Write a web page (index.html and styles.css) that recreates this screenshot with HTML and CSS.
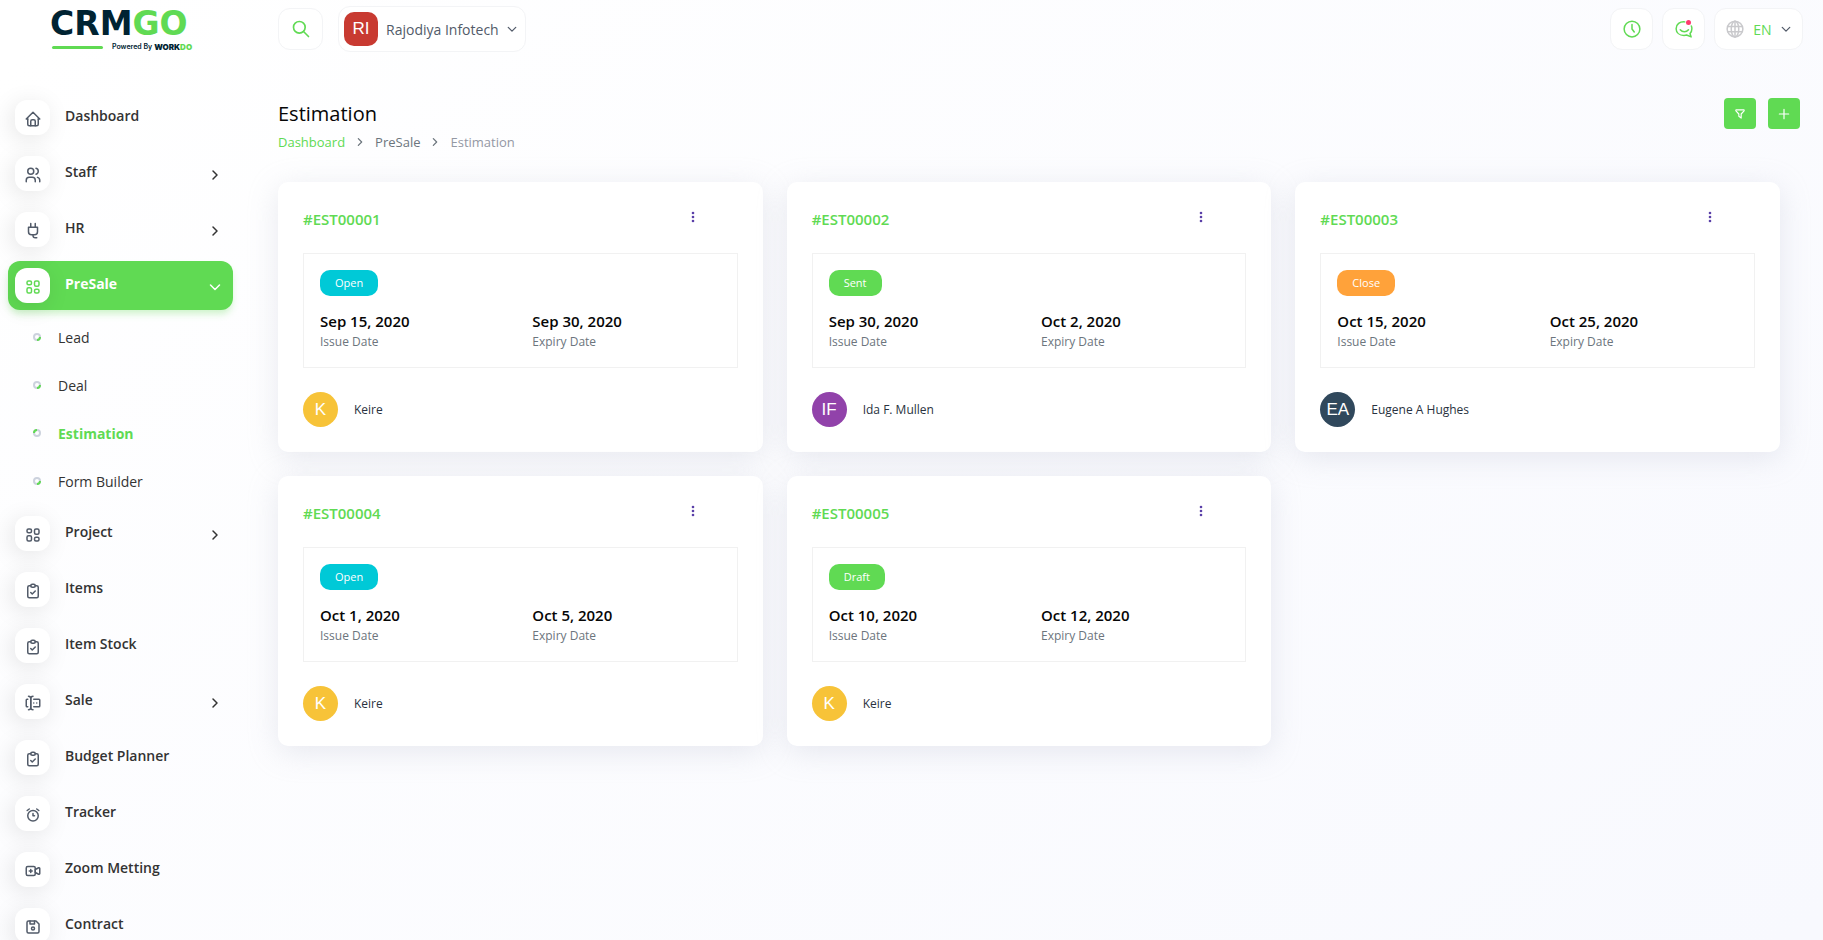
FILE: index.html
```html
<!DOCTYPE html>
<html lang="en">
<head>
<meta charset="utf-8">
<meta name="viewport" content="width=device-width, initial-scale=1">
<title>Estimation</title>
<link rel="stylesheet" href="styles.css">
</head>
<body>
<svg class="sprite" aria-hidden="true">
  <symbol id="i-home" viewBox="0 0 24 24"><path d="M5 12H3l9-9 9 9h-2"/><path d="M5 12v7a2 2 0 0 0 2 2h10a2 2 0 0 0 2-2v-7"/><path d="M9 21v-6a2 2 0 0 1 2-2h2a2 2 0 0 1 2 2v6"/></symbol>
  <symbol id="i-users" viewBox="0 0 24 24"><circle cx="9" cy="7" r="4"/><path d="M3 21v-2a4 4 0 0 1 4-4h4a4 4 0 0 1 4 4v2"/><path d="M16 3.13a4 4 0 0 1 0 7.75"/><path d="M21 21v-2a4 4 0 0 0-3-3.85"/></symbol>
  <symbol id="i-plug" viewBox="0 0 24 24"><path d="M9 2v5M15 2v5"/><path d="M6 7h12v6a4 4 0 0 1-4 4h-4a4 4 0 0 1-4-4z"/><path d="M12 17v1a3 3 0 0 0 3 3h2"/></symbol>
  <symbol id="i-layout" viewBox="0 0 24 24"><rect x="4" y="4" width="6" height="5" rx="2"/><rect x="4" y="13" width="6" height="7" rx="2"/><rect x="14" y="4" width="6" height="7" rx="2"/><rect x="14" y="15" width="6" height="5" rx="2"/></symbol>
  <symbol id="i-clipboard" viewBox="0 0 24 24"><path d="M9 5H7a2 2 0 0 0-2 2v12a2 2 0 0 0 2 2h10a2 2 0 0 0 2-2V7a2 2 0 0 0-2-2h-2"/><rect x="9" y="3" width="6" height="4" rx="2"/><path d="M9 14l2 2 4-4"/></symbol>
  <symbol id="i-forms" viewBox="0 0 24 24"><path d="M12 3a3 3 0 0 0-3 3v12a3 3 0 0 0 3 3"/><path d="M6 3a3 3 0 0 1 3 3v12a3 3 0 0 1-3 3"/><path d="M13 7h7a1 1 0 0 1 1 1v8a1 1 0 0 1-1 1h-7"/><path d="M5 7H4a1 1 0 0 0-1 1v8a1 1 0 0 0 1 1h1"/><path d="M17 12h.01M13 12h.01"/></symbol>
  <symbol id="i-alarm" viewBox="0 0 24 24"><circle cx="12" cy="13" r="7"/><path d="M12 10v3h2"/><path d="M7 4L4.250 6M17 4l2.750 2"/></symbol>
  <symbol id="i-video" viewBox="0 0 24 24"><path d="M15 10l4.553-2.276A1 1 0 0 1 21 8.618v6.764a1 1 0 0 1-1.447.894L15 14z"/><rect x="3" y="6" width="12" height="12" rx="2"/><path d="M7 12h4M9 10v4"/></symbol>
  <symbol id="i-floppy" viewBox="0 0 24 24"><path d="M6 4h10l4 4v10a2 2 0 0 1-2 2H6a2 2 0 0 1-2-2V6a2 2 0 0 1 2-2"/><circle cx="12" cy="14" r="2"/><path d="M14 4v4H8V4"/></symbol>
  <symbol id="i-right" viewBox="0 0 24 24"><path d="M8 4l8 8-8 8"/></symbol>
  <symbol id="i-down" viewBox="0 0 24 24"><path d="M3 8l9 9 9-9"/></symbol>
  <symbol id="i-search" viewBox="0 0 24 24"><circle cx="10" cy="10" r="7"/><path d="M21 21l-6-6"/></symbol>
  <symbol id="i-clock" viewBox="0 0 24 24"><circle cx="12" cy="12" r="10.500"/><path d="M12 6v6l3 4"/></symbol>
  <symbol id="i-chat" viewBox="0 0 24 24"><path d="M13 2.500C6.500 2 1.500 5.500 1.500 11.500c0 5.500 4.500 9 10.500 9 1.500 0 2.500-.2 3.500-.5l6 2.500-1.500-4.500c1.500-1.500 2.500-3.500 2.500-6.500 0-1.500-.2-2.500-.7-3.500"/><path d="M7 13c3 3.500 8 3.500 11 0"/></symbol>
  <symbol id="i-globe" viewBox="0 0 24 24"><circle cx="12" cy="12" r="10.500"/><ellipse cx="12" cy="12" rx="5" ry="10.500"/><path d="M12 1.500v21M2.500 8.500h19M2.500 15.500h19"/></symbol>
  <symbol id="i-filter" viewBox="0 0 24 24"><path d="M5.500 5h13a1 1 0 0 1 .5 1.500L14 12v7l-4-3v-4L5 6.500A1 1 0 0 1 5.500 5"/></symbol>
  <symbol id="i-plus" viewBox="0 0 24 24"><path d="M12 4v16M4 12h16"/></symbol>
  <symbol id="i-dots" viewBox="0 0 12 12"><circle cx="6" cy="2" r="1.300"/><circle cx="6" cy="6" r="1.300"/><circle cx="6" cy="10" r="1.300"/></symbol>
  <symbol id="i-ring" viewBox="0 0 8 8"><circle cx="4" cy="4" r="3"/><path d="M7 4a3 3 0 0 1-3 3"/></symbol>
</svg>

<div class="app">
  <aside class="sidebar">
    <a class="logo" href="#" aria-label="CRMGO, powered by WorkDo">
      <span class="logo-name">CRM<span class="logo-go">GO</span></span>
      <span class="logo-sub"><span class="logo-bar"></span><span class="logo-by">Powered By</span><span class="logo-work">WORK<span class="logo-go">DO</span></span></span>
    </a>
    <nav>
      <ul class="menu">
        <li><a class="item" href="#"><span class="tile"><svg class="icon"><use href="#i-home"/></svg></span><span class="label">Dashboard</span></a></li>
        <li><a class="item" href="#"><span class="tile"><svg class="icon"><use href="#i-users"/></svg></span><span class="label">Staff</span><svg class="arrow"><use href="#i-right"/></svg></a></li>
        <li><a class="item" href="#"><span class="tile"><svg class="icon"><use href="#i-plug"/></svg></span><span class="label">HR</span><svg class="arrow"><use href="#i-right"/></svg></a></li>
        <li class="open">
          <a class="item active" href="#"><span class="tile"><svg class="icon"><use href="#i-layout"/></svg></span><span class="label">PreSale</span><svg class="arrow"><use href="#i-down"/></svg></a>
          <ul class="submenu">
            <li><a class="sub" href="#"><svg class="ring"><use href="#i-ring"/></svg><span>Lead</span></a></li>
            <li><a class="sub" href="#"><svg class="ring"><use href="#i-ring"/></svg><span>Deal</span></a></li>
            <li><a class="sub current" href="#"><svg class="ring"><use href="#i-ring"/></svg><span>Estimation</span></a></li>
            <li><a class="sub" href="#"><svg class="ring"><use href="#i-ring"/></svg><span>Form Builder</span></a></li>
          </ul>
        </li>
        <li><a class="item" href="#"><span class="tile"><svg class="icon"><use href="#i-layout"/></svg></span><span class="label">Project</span><svg class="arrow"><use href="#i-right"/></svg></a></li>
        <li><a class="item" href="#"><span class="tile"><svg class="icon"><use href="#i-clipboard"/></svg></span><span class="label">Items</span></a></li>
        <li><a class="item" href="#"><span class="tile"><svg class="icon"><use href="#i-clipboard"/></svg></span><span class="label">Item Stock</span></a></li>
        <li><a class="item" href="#"><span class="tile"><svg class="icon"><use href="#i-forms"/></svg></span><span class="label">Sale</span><svg class="arrow"><use href="#i-right"/></svg></a></li>
        <li><a class="item" href="#"><span class="tile"><svg class="icon"><use href="#i-clipboard"/></svg></span><span class="label">Budget Planner</span></a></li>
        <li><a class="item" href="#"><span class="tile"><svg class="icon"><use href="#i-alarm"/></svg></span><span class="label">Tracker</span></a></li>
        <li><a class="item" href="#"><span class="tile"><svg class="icon"><use href="#i-video"/></svg></span><span class="label">Zoom Metting</span></a></li>
        <li><a class="item" href="#"><span class="tile"><svg class="icon"><use href="#i-floppy"/></svg></span><span class="label">Contract</span></a></li>
      </ul>
    </nav>
  </aside>

  <div class="main">
    <header class="topbar">
      <button class="pill search" aria-label="Search"><svg class="icon"><use href="#i-search"/></svg></button>
      <button class="pill company"><span class="company-badge">RI</span><span>Rajodiya Infotech</span><svg class="caret"><use href="#i-down"/></svg></button>
      <div class="tools">
        <button class="pill tool" aria-label="Timer"><svg class="icon"><use href="#i-clock"/></svg></button>
        <button class="pill tool" aria-label="Messages"><svg class="icon"><use href="#i-chat"/></svg><span class="dot"></span></button>
        <button class="pill lang"><svg class="icon globe"><use href="#i-globe"/></svg><span>EN</span><svg class="caret"><use href="#i-down"/></svg></button>
      </div>
    </header>

    <main>
      <div class="page-head">
        <div>
          <h1>Estimation</h1>
          <nav class="crumbs" aria-label="Breadcrumb">
            <a class="crumb-link" href="#">Dashboard</a><svg class="sep"><use href="#i-right"/></svg><span>PreSale</span><svg class="sep"><use href="#i-right"/></svg><span class="crumb-here">Estimation</span>
          </nav>
        </div>
        <div class="actions">
          <button class="action" aria-label="Filter"><svg class="glyph"><use href="#i-filter"/></svg></button>
          <button class="action" aria-label="Create"><svg class="glyph"><use href="#i-plus"/></svg></button>
        </div>
      </div>

      <div class="cards">
        <article class="card">
          <div class="card-head"><a class="number" href="#">#EST00001</a><button class="more" aria-label="Options"><svg class="dots"><use href="#i-dots"/></svg></button></div>
          <div class="panel">
            <span class="badge info">Open</span>
            <dl class="dates"><div><dd>Sep 15, 2020</dd><dt>Issue Date</dt></div><div><dd>Sep 30, 2020</dd><dt>Expiry Date</dt></div></dl>
          </div>
          <div class="person"><span class="avatar yellow">K</span><span>Keire</span></div>
        </article>
        <article class="card">
          <div class="card-head"><a class="number" href="#">#EST00002</a><button class="more" aria-label="Options"><svg class="dots"><use href="#i-dots"/></svg></button></div>
          <div class="panel">
            <span class="badge success">Sent</span>
            <dl class="dates"><div><dd>Sep 30, 2020</dd><dt>Issue Date</dt></div><div><dd>Oct 2, 2020</dd><dt>Expiry Date</dt></div></dl>
          </div>
          <div class="person"><span class="avatar purple">IF</span><span>Ida F. Mullen</span></div>
        </article>
        <article class="card">
          <div class="card-head"><a class="number" href="#">#EST00003</a><button class="more" aria-label="Options"><svg class="dots"><use href="#i-dots"/></svg></button></div>
          <div class="panel">
            <span class="badge warning">Close</span>
            <dl class="dates"><div><dd>Oct 15, 2020</dd><dt>Issue Date</dt></div><div><dd>Oct 25, 2020</dd><dt>Expiry Date</dt></div></dl>
          </div>
          <div class="person"><span class="avatar navy">EA</span><span>Eugene A Hughes</span></div>
        </article>
        <article class="card">
          <div class="card-head"><a class="number" href="#">#EST00004</a><button class="more" aria-label="Options"><svg class="dots"><use href="#i-dots"/></svg></button></div>
          <div class="panel">
            <span class="badge info">Open</span>
            <dl class="dates"><div><dd>Oct 1, 2020</dd><dt>Issue Date</dt></div><div><dd>Oct 5, 2020</dd><dt>Expiry Date</dt></div></dl>
          </div>
          <div class="person"><span class="avatar yellow">K</span><span>Keire</span></div>
        </article>
        <article class="card">
          <div class="card-head"><a class="number" href="#">#EST00005</a><button class="more" aria-label="Options"><svg class="dots"><use href="#i-dots"/></svg></button></div>
          <div class="panel">
            <span class="badge success">Draft</span>
            <dl class="dates"><div><dd>Oct 10, 2020</dd><dt>Issue Date</dt></div><div><dd>Oct 12, 2020</dd><dt>Expiry Date</dt></div></dl>
          </div>
          <div class="person"><span class="avatar yellow">K</span><span>Keire</span></div>
        </article>
      </div>
    </main>
  </div>
</div>
</body>
</html>
```
FILE: styles.css
```css
:root {
  --green: #60da53;
  --ink: #060606;
  --slate: #525b69;
}

* { box-sizing: border-box; }

body {
  margin: 0;
  font-family: "Open Sans", sans-serif;
  font-size: 14px;
  color: #293240;
  background: linear-gradient(141deg, #ffffff 3%, #f8f9fe 99%) fixed;
}

a { color: inherit; text-decoration: none; }
ul { list-style: none; margin: 0; padding: 0; }
button { font: inherit; color: inherit; padding: 0; border: 0; background: none; cursor: pointer; }

svg { fill: none; stroke: currentColor; stroke-width: 2; stroke-linecap: round; stroke-linejoin: round; flex: none; }
.sprite { display: none; }
.icon { width: 18px; height: 18px; }

.app { display: flex; min-height: 100vh; }

/* Sidebar */
.sidebar { width: 278px; height: 100vh; flex: none; overflow: hidden; position: sticky; top: 0; }
.logo { display: flex; flex-direction: column; height: 93px; padding: 8px 0 0 50px; color: #002332; }
.logo-name { font: 700 33px/32px "DejaVu Sans", sans-serif; }
.logo-go { color: var(--green); }
.logo-sub { display: flex; align-items: center; height: 14px; font: 600 7px/14px Inter, sans-serif; }
.logo-bar { width: 51px; height: 3px; margin: 0 9px 0 2px; border-radius: 2px; background: var(--green); }
.logo-work { margin-left: 2px; font-size: 8px; font-weight: 900; }

.menu { padding-left: 8px; width: 233px; }
.menu > li { margin-bottom: 7px; }
.item { display: flex; align-items: center; height: 49px; padding: 0 12px 0 7px; border-radius: 12px; font-weight: 600; color: #333333; }
.tile { display: flex; align-items: center; justify-content: center; width: 35px; height: 35px; padding-top: 2px; margin-right: 15px; border-radius: 12px; background: #ffffff; color: var(--slate); box-shadow: -3px 4px 23px rgba(0, 0, 0, 0.1); }
.label { flex: 1; padding-bottom: 5px; }
.arrow { width: 12px; height: 12px; margin-top: 3px; stroke-width: 3; }
.active { color: #ffffff; background: var(--green); font-weight: 700; box-shadow: 0 5px 7px -1px rgba(96, 218, 83, 0.3); }
.active .tile { color: var(--green); }

.submenu { padding-top: 4px; }
.menu > .open { margin-bottom: 3px; }
.sub { display: flex; align-items: center; gap: 17px; height: 48px; padding-left: 25px; color: #333333; font-weight: 500; }
.sub span { padding-bottom: 2px; }
.ring { width: 8px; height: 8px; margin-bottom: 2px; color: #ccd2dd; }
#i-ring path { stroke: var(--green); stroke-linecap: butt; }
.current { color: var(--green); font-weight: 700; }
.current .ring { transform: rotate(180deg); }

/* Top bar */
.main { flex: 1; min-width: 0; padding-right: 20px; }
.topbar { display: flex; align-items: center; height: 58px; }
.pill { position: relative; display: flex; align-items: center; justify-content: center; height: 42px; border: 1px solid #f3f4f6; border-radius: 12px; background: #ffffff; color: var(--green); }
.search { width: 45px; }
.search .icon { width: 20px; height: 20px; }
.company { height: 46px; gap: 8px; margin-left: 15px; padding: 0 8px 0 5px; color: var(--slate); font-weight: 500; }
.company-badge { width: 34px; height: 34px; border-radius: 10px; background: #c83a31; color: #ffffff; font: 17px/34px "Liberation Sans", sans-serif; }
.caret { width: 10px; height: 10px; color: var(--slate); stroke-width: 3; }
.tools { display: flex; gap: 9px; margin-left: auto; }
.tool { width: 43px; }
.lang { width: 89px; gap: 9px; font-weight: 500; }
.globe { color: #c9c9cc; }
.dot { position: absolute; top: 11px; right: 13px; width: 5px; height: 5px; border-radius: 50%; background: #ff3a6e; }

/* Page heading */
.page-head { display: flex; justify-content: space-between; align-items: flex-start; padding: 40px 3px 0 0; height: 124px; }
h1 { margin: 0; font-size: 20px; line-height: 32px; font-weight: 500; color: var(--ink); }
.crumbs { display: flex; align-items: center; padding-top: 2px; font-size: 13px; line-height: 20px; color: #6c757d; }
.crumb-link { color: var(--green); }
.crumb-here { color: #9498a4; }
.sep { width: 10px; height: 10px; margin: 0 10px; stroke-width: 3; }
.actions { display: flex; gap: 12px; }
.action { display: flex; align-items: center; justify-content: center; width: 32px; height: 31px; border-radius: 4px; background: var(--green); color: #ffffff; }
.glyph { width: 14px; height: 14px; }

/* Cards */
.cards { display: grid; grid-template-columns: repeat(3, 1fr); gap: 24px; padding-right: 23px; }
.card { padding: 25px; border-radius: 10px; background: #ffffff; box-shadow: 0 6px 30px rgba(182, 186, 203, 0.3); }
.card-head { display: flex; justify-content: space-between; align-items: flex-start; padding-right: 33px; margin-bottom: 22px; }
.number { font-size: 15px; line-height: 24px; font-weight: 600; color: var(--green); }
.more { display: flex; align-items: center; justify-content: center; width: 24px; height: 20px; color: #5a3fa8; }
.dots { width: 12px; height: 12px; fill: currentColor; stroke: none; }
.panel { padding: 16px; border: 1px solid #f1f1f1; }
.badge { display: inline-block; padding: 0 15px; border-radius: 10px; font-size: 11px; line-height: 26px; color: #ffffff; vertical-align: top; }
.info { background: #00c9d7; }
.success { background: var(--green); }
.warning { background: #ffa23a; }
.dates { display: grid; grid-template-columns: 1fr 1fr; gap: 24px; margin: 13px 0 1px; }
.dates > div { display: flex; flex-direction: column; }
.dates dd { margin: 0; font-size: 15px; line-height: 24px; font-weight: 600; color: var(--ink); }
.dates dt { font-size: 12px; line-height: 17px; color: #6c757d; }
.person { display: flex; align-items: center; gap: 16px; margin-top: 24px; font-size: 12px; }
.avatar { width: 35px; height: 35px; border-radius: 50%; color: #ffffff; font: 17px/35px "Liberation Sans", sans-serif; text-align: center; }
.yellow { background: #f7c338; }
.purple { background: #9142aa; }
.navy { background: #30485c; }
```
